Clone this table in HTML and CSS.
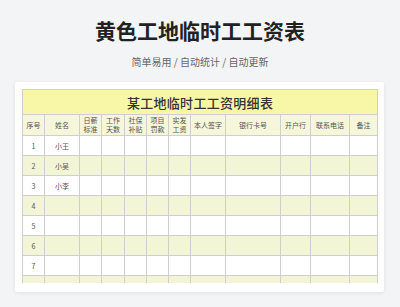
FILE: index.html
```html
<!DOCTYPE html>
<html lang="zh">
<head>
<meta charset="utf-8">
<title>黄色工地临时工工资表</title>
<link rel="stylesheet" href="styles.css">
</head>
<body>
<header class="head">
  <h1 class="title">黄色工地临时工工资表</h1>
  <p class="sub">简单易用 / 自动统计 / 自动更新</p>
</header>
<main class="card">
  <div class="clip">
    <table class="sheet">
      <colgroup>
        <col class="c22"><col class="c35"><col class="c22"><col class="c23"><col class="c22"><col class="c22"><col class="c22"><col class="c35"><col class="c55"><col class="c30"><col class="c39"><col class="c28">
      </colgroup>
      <tr class="cap"><td colspan="12">某工地临时工工资明细表</td></tr>
      <tr class="hd">
        <td>序号</td><td>姓名</td><td>日薪<br>标准</td><td>工作<br>天数</td><td>社保<br>补贴</td><td>项目<br>罚款</td><td>实发<br>工资</td><td>本人签字</td><td>银行卡号</td><td>开户行</td><td>联系电话</td><td>备注</td>
      </tr>
      <tr class="row"><td>1</td><td>小王</td><td></td><td></td><td></td><td></td><td></td><td></td><td></td><td></td><td></td><td></td></tr>
      <tr class="row alt"><td>2</td><td>小吴</td><td></td><td></td><td></td><td></td><td></td><td></td><td></td><td></td><td></td><td></td></tr>
      <tr class="row"><td>3</td><td>小李</td><td></td><td></td><td></td><td></td><td></td><td></td><td></td><td></td><td></td><td></td></tr>
      <tr class="row alt"><td>4</td><td></td><td></td><td></td><td></td><td></td><td></td><td></td><td></td><td></td><td></td><td></td></tr>
      <tr class="row"><td>5</td><td></td><td></td><td></td><td></td><td></td><td></td><td></td><td></td><td></td><td></td><td></td></tr>
      <tr class="row alt"><td>6</td><td></td><td></td><td></td><td></td><td></td><td></td><td></td><td></td><td></td><td></td><td></td></tr>
      <tr class="row"><td>7</td><td></td><td></td><td></td><td></td><td></td><td></td><td></td><td></td><td></td><td></td><td></td></tr>
      <tr class="row alt"><td>8</td><td></td><td></td><td></td><td></td><td></td><td></td><td></td><td></td><td></td><td></td><td></td></tr>
    </table>
  </div>
</main>
</body>
</html>
```
FILE: styles.css
```css
* { box-sizing: border-box; }
html, body { margin: 0; padding: 0; }
body {
  background: #f3f4f6;
  font-family: "Noto Sans CJK SC", "Noto Sans", sans-serif;
  color: #333;
  width: 400px;
  height: 307px;
  overflow: hidden;
}
.head {
  padding-top: 18px;
  text-align: center;
}
.title {
  margin: 0;
  font-size: 21px;
  line-height: 25px;
  font-weight: 700;
  color: #222;
}
.sub {
  margin: 12px 0 0;
  font-size: 10px;
  line-height: 14px;
  color: #666;
}
.card {
  display: block;
  margin: 13px 16px 0 15px;
  height: 210px;
  padding: 7px 6px 0 7px;
  background: #fff;
  border-radius: 2px;
  box-shadow: 0 1px 4px rgba(0,0,0,0.08);
}
.clip {
  height: 194px;
  overflow: hidden;
}
.sheet {
  width: 355px;
  table-layout: fixed;
  border-collapse: collapse;
  font-size: 7px;
  color: #555;
}
.sheet td {
  border: 1px solid #cfcfcf;
  padding: 0;
  text-align: center;
  vertical-align: middle;
}
.c22 { width: 22px; }
.c23 { width: 23px; }
.c28 { width: 28px; }
.c30 { width: 30px; }
.c35 { width: 35px; }
.c39 { width: 39px; }
.c55 { width: 55px; }
.cap td {
  height: 25px;
  background: #f8f7a7;
  font-size: 13px;
  font-weight: 500;
  color: #333;
  letter-spacing: 0.3px;
}
.hd td {
  height: 21px;
  background: #f5f6da;
  line-height: 9px;
  color: #555;
}
.row td {
  height: 20px;
  background: #fff;
}
.row.alt td {
  background: #f3f6d6;
}
```
